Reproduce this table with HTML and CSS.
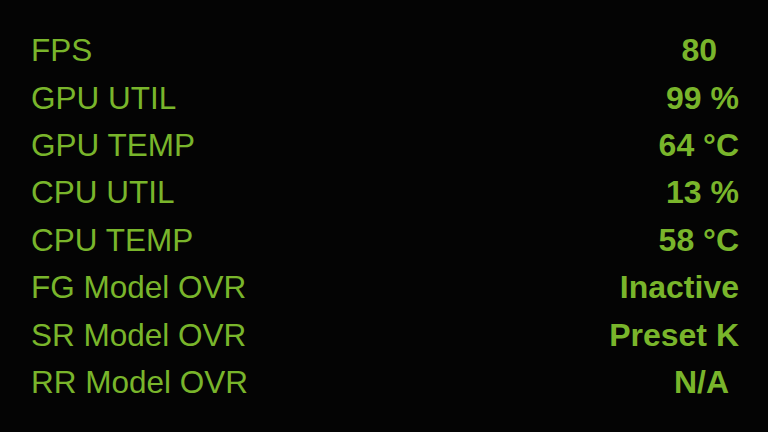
FILE: index.html
```html
<!DOCTYPE html>
<html>
<head>
<meta charset="utf-8">
<link rel="stylesheet" href="styles.css">
</head>
<body>
<div class="overlay">
  <div class="row"><span class="label">FPS</span><span class="value v-fps">80</span></div>
  <div class="row"><span class="label">GPU UTIL</span><span class="value">99 %</span></div>
  <div class="row"><span class="label">GPU TEMP</span><span class="value">64 °C</span></div>
  <div class="row"><span class="label">CPU UTIL</span><span class="value">13 %</span></div>
  <div class="row"><span class="label">CPU TEMP</span><span class="value">58 °C</span></div>
  <div class="row"><span class="label">FG Model OVR</span><span class="value">Inactive</span></div>
  <div class="row"><span class="label">SR Model OVR</span><span class="value">Preset K</span></div>
  <div class="row"><span class="label">RR Model OVR</span><span class="value v-na">N/A</span></div>
</div>
</body>
</html>
```

FILE: styles.css
```css
html, body {
  margin: 0;
  padding: 0;
  background: #040404;
  width: 768px;
  height: 432px;
  overflow: hidden;
}
.overlay {
  padding: 27px 29px 0 31px;
  font-family: "Liberation Sans", Arial, sans-serif;
  font-size: 31.5px;
  color: #79b52b;
}
.row {
  display: flex;
  justify-content: space-between;
  align-items: center;
  height: 47.4px;
}
.label {
  font-weight: 400;
}
.value {
  font-weight: 700;
  font-size: 32px;
}
.v-fps {
  padding-right: 22px;
}
.v-na {
  padding-right: 10px;
}
```
